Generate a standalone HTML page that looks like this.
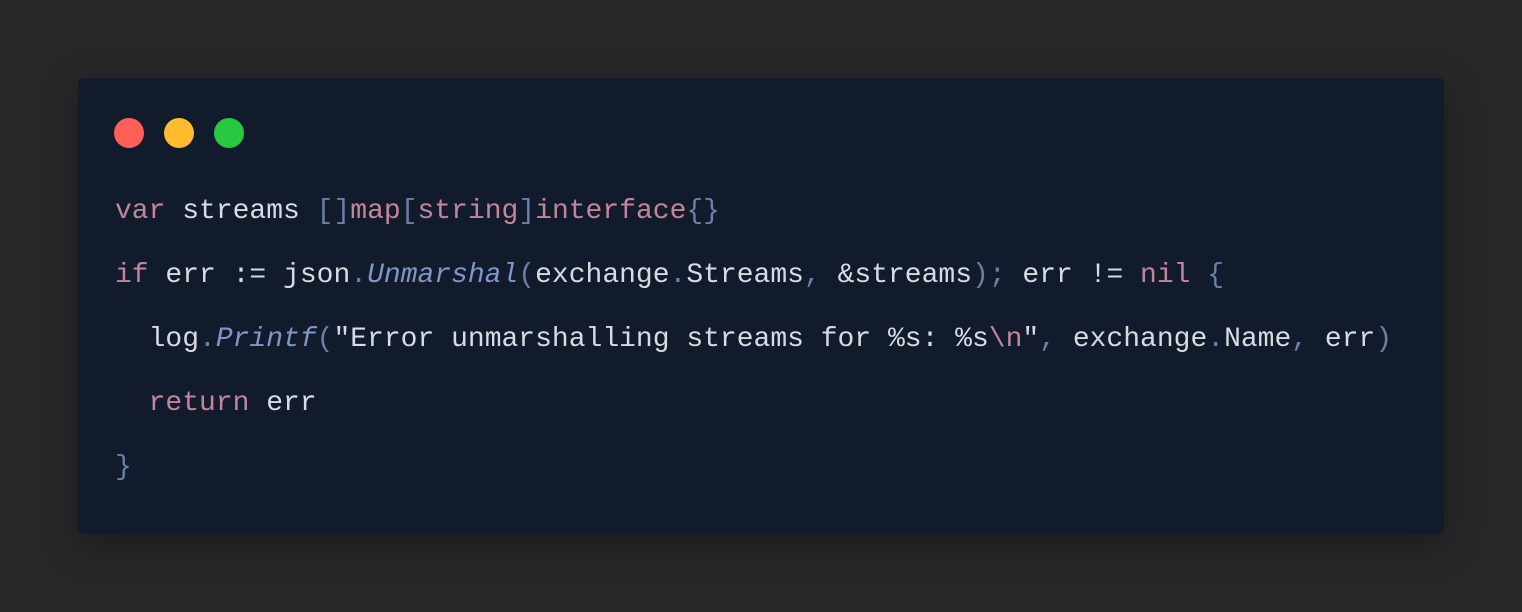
<!DOCTYPE html>
<html><head><style>
html,body{margin:0;padding:0}
body{width:1522px;height:612px;background:#282828;position:relative;overflow:hidden}
.card{position:absolute;left:78px;top:78px;width:1366px;height:456px;background:#111b2c;border-radius:6px;box-shadow:0 10px 40px rgba(0,0,0,.35)}
.dot{position:absolute;top:40px;width:30px;height:30px;border-radius:50%}
pre{position:absolute;left:37px;top:102px;margin:0;font-family:"Liberation Mono",monospace;font-size:28px;line-height:64px;color:#d8dbe0}
.k{color:#c2869b}.p{color:#6c7fa6}.f{color:#8196c6;font-style:italic}
</style></head><body>
<div class="card">
<div class="dot" style="left:36px;background:#ff5f57"></div>
<div class="dot" style="left:86px;background:#febc2e"></div>
<div class="dot" style="left:136px;background:#28c840"></div>
<pre><span class="k">var</span> streams <span class="p">[]</span><span class="k">map</span><span class="p">[</span><span class="k">string</span><span class="p">]</span><span class="k">interface</span><span class="p">{}</span>
<span class="k">if</span> err := json<span class="p">.</span><span class="f">Unmarshal</span><span class="p">(</span>exchange<span class="p">.</span>Streams<span class="p">,</span> &amp;streams<span class="p">);</span> err != <span class="k">nil</span> <span class="p">{</span>
  log<span class="p">.</span><span class="f">Printf</span><span class="p">(</span>"Error unmarshalling streams for %s: %s<span class="k">\n</span>"<span class="p">,</span> exchange<span class="p">.</span>Name<span class="p">,</span> err<span class="p">)</span>
  <span class="k">return</span> err
<span class="p">}</span></pre>
</div>
</body></html>
